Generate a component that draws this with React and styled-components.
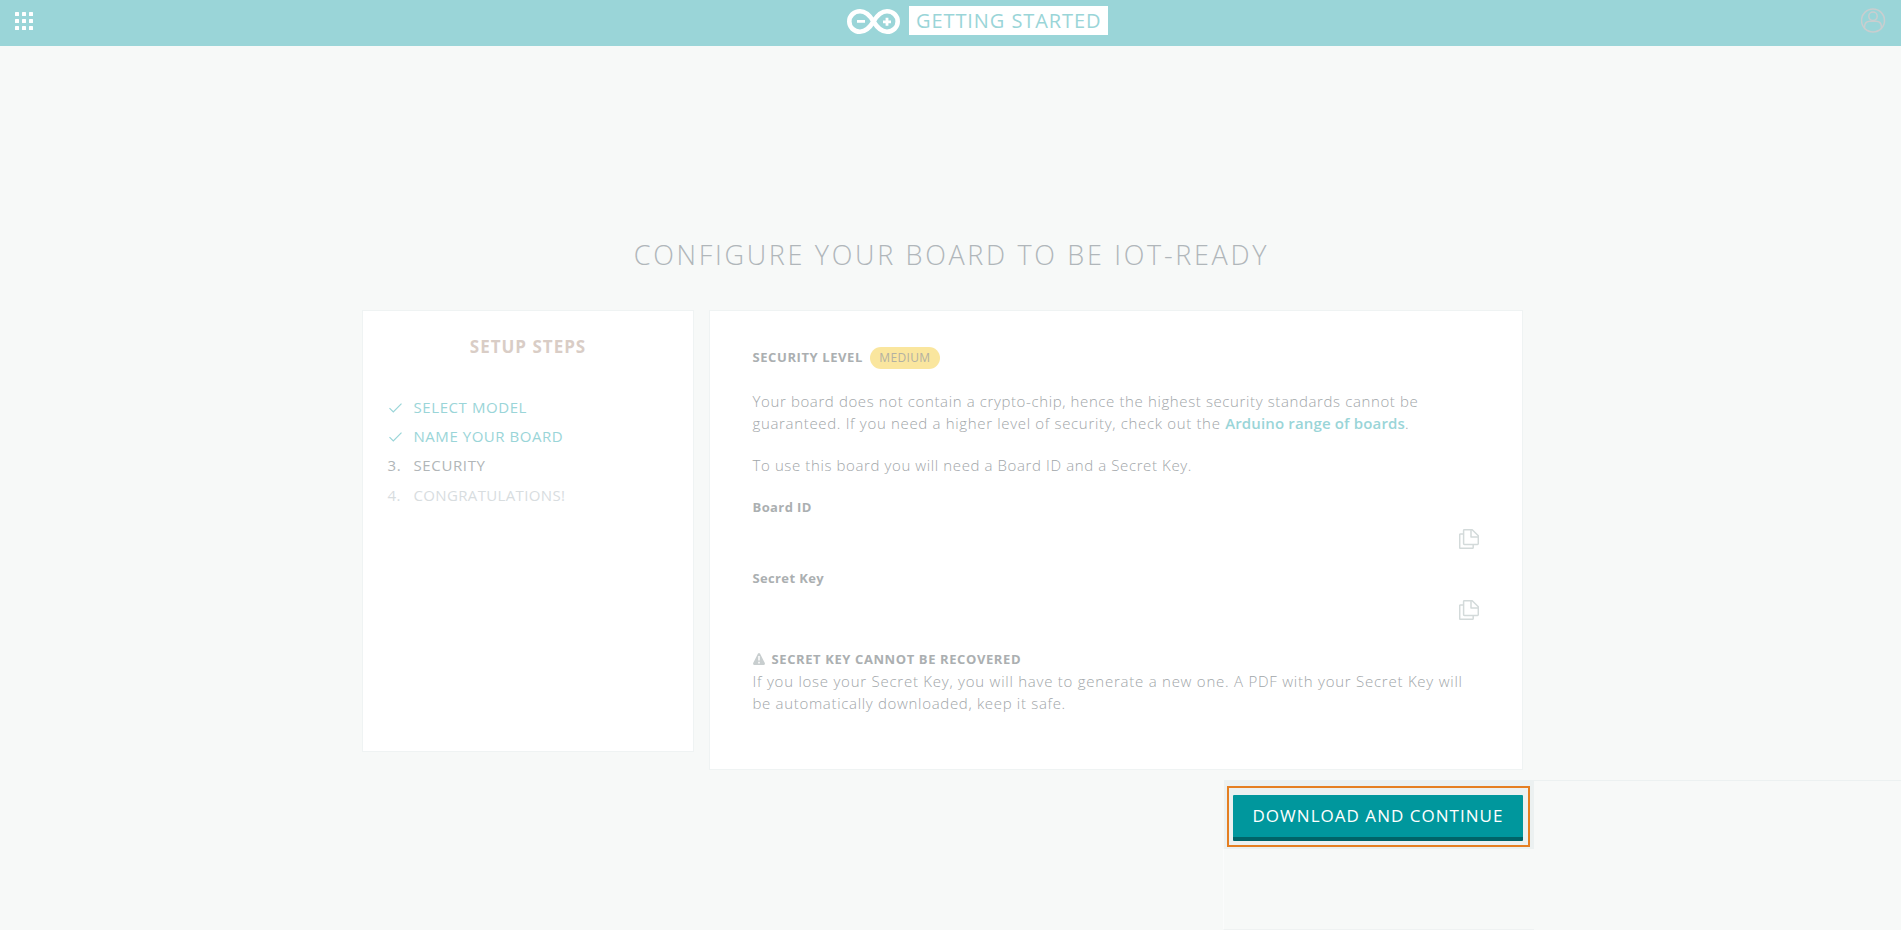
import React from "react";
import styled, { createGlobalStyle } from "styled-components";

const Global = createGlobalStyle`
  * { box-sizing: border-box; }
  body {
    margin: 0;
    background: #f7f9f8;
    color: #b0b4b6;
    font-family: "Open Sans", sans-serif;
    overflow: hidden;
  }
`;

const Page = styled.div`
  display: flex;
  flex-direction: column;
  height: 930px;
`;

const Header = styled.header`
  display: flex;
  align-items: flex-start;
  height: 46px;
  padding: 0 15px;
  background: #9ad5d8;
`;

const MenuButton = styled.div`
  display: grid;
  grid-template-columns: repeat(3, 4px);
  gap: 3px;
  margin-top: 12px;

  i {
    width: 4px;
    height: 4px;
    border-radius: 0.5px;
    background: #fff;
  }
`;

const Brand = styled.div`
  display: flex;
  align-items: flex-start;
  margin-left: 814px;

  svg {
    margin-top: 9px;
  }
`;

const BrandLabel = styled.div`
  width: 199px;
  height: 29px;
  margin: 6px 0 0 9px;
  padding-left: 7px;
  background: #fff;
  color: #9ad5d8;
  font-size: 20px;
  line-height: 29px;
  letter-spacing: 0.92px;
  white-space: nowrap;
`;

const Avatar = styled.svg`
  margin: 8px 0 0 auto;
`;

const Title = styled.h1`
  height: 36px;
  margin: 191px 0 37px;
  padding-left: 2px;
  color: #b0b6ba;
  font-size: 27px;
  font-weight: 300;
  line-height: 36px;
  letter-spacing: 2.68px;
  text-align: center;
`;

const Panels = styled.div`
  display: flex;
  align-items: flex-start;
  gap: 15px;
  margin-left: 362px;
`;

const Panel = styled.section`
  width: ${(p) => p.$width}px;
  height: ${(p) => p.$height}px;
  padding: ${(p) => p.$padding};
  border: 1px solid #eff3f3;
  background: #fff;
`;

const StepsTitle = styled.h2`
  margin: 0 0 34px;
  color: #d9cdc6;
  font-size: 17px;
  font-weight: 700;
  line-height: 24px;
  letter-spacing: 1px;
  text-align: center;
`;

const Step = styled.div`
  display: flex;
  align-items: center;
  height: 29.2px;
  padding-left: 24px;
  color: ${(p) => p.$color};
  font-size: 15px;
  font-weight: 400;
  line-height: 29.2px;
  letter-spacing: ${(p) => p.$spacing}px;
`;

const StepMark = styled.span`
  display: flex;
  width: 26.5px;
  padding-left: 0.5px;

  svg {
    margin-left: 1.5px;
  }
`;

const LevelRow = styled.div`
  display: flex;
  align-items: flex-start;
  margin-bottom: 21px;
`;

const Label = styled.div`
  color: #abafb1;
  font-size: 13px;
  font-weight: 700;
  line-height: 20px;
  letter-spacing: ${(p) => p.$spacing}px;
`;

const Badge = styled.span`
  width: 70px;
  height: 22px;
  margin-left: 7px;
  border-radius: 11px;
  background: #fae69e;
  color: #b3b1a2;
  font-size: 12px;
  line-height: 22px;
  letter-spacing: 0.35px;
  text-align: center;
`;

const Text = styled.p`
  margin: 0 0 ${(p) => p.$after || 0}px;
  color: #a1a6a9;
  font-size: 15px;
  font-weight: 300;
  line-height: 22px;
  letter-spacing: ${(p) => p.$spacing}px;
  white-space: nowrap;
`;

const Link = styled.a`
  color: #9ad5d8;
  font-weight: 600;
  letter-spacing: 0.15px;
`;

const CopyRow = styled.div`
  display: flex;
  justify-content: flex-end;
  height: 20px;
  margin: 12px 43px ${(p) => p.$after}px 0;
`;

const WarningRow = styled.div`
  display: flex;
  align-items: flex-start;
  gap: 7px;
  height: 21px;

  svg {
    margin-top: 4px;
  }
`;

const Footer = styled.footer`
  display: flex;
  flex: 1;
  margin-top: 10px;
  padding-left: 1223px;
`;

const FooterColumn = styled.div`
  width: 311px;
  border-left: 1px solid #fbfcfc;
  border-bottom: 1px solid #eff2f2;
`;

const FooterRest = styled.div`
  flex: 1;
  border-top: 1px solid #ecf1f1;
`;

const Backing = styled.div`
  height: 69px;
  margin-left: -1px;
  padding: 6px 4px;
  border-left: 1px solid #f7f9f8;
  background: #ecf1f1;
  background-clip: padding-box;
`;

const Highlight = styled.div`
  width: 303px;
  height: 61px;
  margin-left: -1px;
  padding: 7px 4px;
  border: 2px solid #e57f22;
`;

const Button = styled.button`
  display: block;
  width: 290px;
  height: 46px;
  padding: 0;
  border: 0;
  border-bottom: 4px solid #006468;
  border-radius: 1px;
  background: #00979d;
  color: #fff;
  font-family: inherit;
  font-size: 17px;
  line-height: 42px;
  letter-spacing: 1.03px;
  white-space: nowrap;
`;

const Logo = () => (
  <svg width="53" height="25" viewBox="0 0 53 25" fill="none" stroke="#fff">
    <path
      strokeWidth="4.6"
      d="M26.5 12.5C22.5 5.8 18.8 2.3 13 2.3C6.9 2.3 2.3 6.8 2.3 12.5S6.9 22.7 13 22.7C18.8 22.7 22.5 19.2 26.5 12.5C30.5 5.8 34.2 2.3 40 2.3C46.1 2.3 50.7 6.8 50.7 12.5S46.1 22.7 40 22.7C34.2 22.7 30.5 19.2 26.5 12.5Z"
    />
    <path strokeWidth="2.8" d="M10 12.3H18M36 12.8H44M40 8.8V16.8" />
  </svg>
);

const Check = () => (
  <svg width="13" height="10" viewBox="0 0 13 10" fill="none" stroke="#9ad5d8" strokeWidth="1.2">
    <path d="M.5 5.2L4.3 9L12.5 .7" />
  </svg>
);

const CopyIcon = () => (
  <svg width="20" height="20" viewBox="0 0 20 20" fill="none" stroke="#d3dada" strokeWidth="1.5" strokeLinejoin="round">
    <path d="M4.6 1.5Q4.6 .7 5.4 .7H13.2L19.3 6.8V14.6Q19.3 15.4 18.5 15.4H5.4Q4.6 15.4 4.6 14.6Z" />
    <path d="M12 .9V8.1H19.2" />
    <path d="M4.6 5H1.5Q.7 5 .7 5.8V18.5Q.7 19.3 1.5 19.3H13.4Q14.2 19.3 14.2 18.5V15.6" />
  </svg>
);

const WarningIcon = () => (
  <svg width="12" height="12" viewBox="0 0 12 12">
    <path fill="#c8cecf" d="M4.9.8Q6-.6 7.1.8L11.8 10Q12.3 12 10.6 12H1.4Q-.3 12 .2 10Z" />
    <path stroke="#fff" strokeWidth="1.5" d="M6 3V7.6M6 8.8V10.4" />
  </svg>
);

const steps = [
  { mark: <Check />, label: "SELECT MODEL", color: "#9ad5d8", spacing: 0.58 },
  { mark: <Check />, label: "NAME YOUR BOARD", color: "#9ad5d8", spacing: 0.54 },
  { mark: "3.", label: "SECURITY", color: "#b1b6b8", spacing: 0.63 },
  { mark: "4.", label: "CONGRATULATIONS!", color: "#d8dddf", spacing: 0.35 },
];

export default function App() {
  return (
    <Page>
      <Global />
      <Header>
        <MenuButton>
          {Array.from({ length: 9 }, (_, i) => (
            <i key={i} />
          ))}
        </MenuButton>
        <Brand>
          <Logo />
          <BrandLabel>GETTING STARTED</BrandLabel>
        </Brand>
        <Avatar width="25" height="25" viewBox="0 0 25 25" fill="none" stroke="#c9cecf" strokeWidth="1.5">
          <circle cx="12" cy="12.5" r="11.5" />
          <circle cx="12" cy="8.3" r="4.2" />
          <path d="M3.5 20.5V19Q3.7 13.3 9 13.3H15Q20.3 13.3 20.5 19V20.5" />
        </Avatar>
      </Header>

      <Title>CONFIGURE YOUR BOARD TO BE IOT-READY</Title>

      <Panels>
        <Panel $width={332} $height={442} $padding="24px 0 0">
          <StepsTitle>SETUP STEPS</StepsTitle>
          {steps.map((s) => (
            <Step key={s.label} $color={s.color} $spacing={s.spacing}>
              <StepMark>{s.mark}</StepMark>
              {s.label}
            </Step>
          ))}
        </Panel>

        <Panel $width={814} $height={460} $padding="36px 0 0 42.5px">
          <LevelRow>
            <Label $spacing={0.59}>SECURITY LEVEL</Label>
            <Badge>MEDIUM</Badge>
          </LevelRow>
          <Text $spacing={0.615}>
            Your board does not contain a crypto-chip, hence the highest security standards cannot be
          </Text>
          <Text $spacing={0.67} $after={20}>
            guaranteed. If you need a higher level of security, check out the{" "}
            <Link>Arduino range of boards</Link>.
          </Text>
          <Text $spacing={0.61} $after={21}>
            To use this board you will need a Board ID and a Secret Key.
          </Text>
          <Label $spacing={0.4}>Board ID</Label>
          <CopyRow $after={19}>
            <CopyIcon />
          </CopyRow>
          <Label $spacing={0.36}>Secret Key</Label>
          <CopyRow $after={29}>
            <CopyIcon />
          </CopyRow>
          <WarningRow>
            <WarningIcon />
            <Label $spacing={0.6}>SECRET KEY CANNOT BE RECOVERED</Label>
          </WarningRow>
          <Text $spacing={0.755}>
            If you lose your Secret Key, you will have to generate a new one. A PDF with your Secret Key will
          </Text>
          <Text $spacing={0.68}>be automatically downloaded, keep it safe.</Text>
        </Panel>
      </Panels>

      <Footer>
        <FooterColumn>
          <Backing>
            <Highlight>
              <Button>DOWNLOAD AND CONTINUE</Button>
            </Highlight>
          </Backing>
        </FooterColumn>
        <FooterRest />
      </Footer>
    </Page>
  );
}
